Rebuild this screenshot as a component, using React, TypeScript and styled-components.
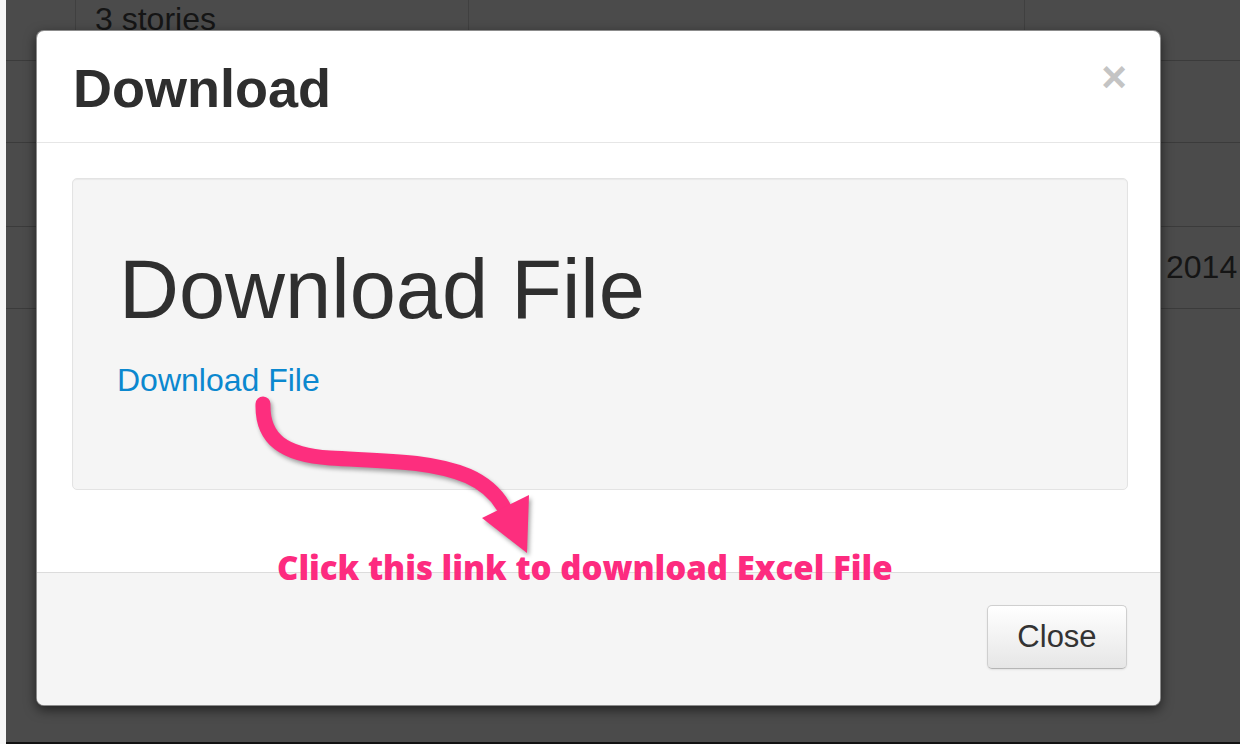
import React from "react";
import styled, { createGlobalStyle } from "styled-components";

const Global = createGlobalStyle`
  html, body { margin: 0; padding: 0; background: #4b4b4b; }
  body { font-family: "Liberation Sans", Arial, sans-serif; }
  * { box-sizing: border-box; }
`;

const Page = styled.div`
  position: relative;
  width: 1240px;
  height: 744px;
  overflow: hidden;
  padding-left: 6px;
  background: #4b4b4b;
  box-shadow: inset 6px 0 0 #f6f6f6, inset 0 -2px 0 #121212;
`;

const Table = styled.div`
  display: grid;
  grid-template-columns: 69px 393px 556px 1fr;
  grid-template-rows: 83px 82px 84px 82px;
  margin-top: -22px;
`;

const Cell = styled.div<{ $first?: boolean; $indent?: number }>`
  border-bottom: 1px solid #3b3b3b;
  border-left: ${(p) => (p.$first ? "none" : "1px solid #404040")};
  color: #151515;
  font-size: 32px;
  display: flex;
  align-items: center;
  padding: 0 0 0 ${(p) => p.$indent ?? 19}px;
  white-space: nowrap;
  overflow: hidden;
`;

const Modal = styled.div`
  position: absolute;
  left: 36px;
  top: 30px;
  width: 1125px;
  height: 676px;
  background: #fff;
  border: 1px solid rgba(0, 0, 0, 0.45);
  border-radius: 8px;
  box-shadow: 0 4px 12px rgba(0, 0, 0, 0.55);
  display: flex;
  flex-direction: column;
  overflow: hidden;
`;

const Header = styled.div`
  height: 112px;
  flex: none;
  padding: 2px 33px 0 36px;
  border-bottom: 1px solid #e6e6e6;
  display: flex;
  align-items: center;
  justify-content: space-between;
`;

const Title = styled.h3`
  margin: 0;
  font-size: 54px;
  line-height: 1;
  font-weight: bold;
  color: #2e2e2e;
`;

const CloseX = styled.span`
  font-size: 44px;
  line-height: 1;
  font-weight: bold;
  color: #c4c4c4;
  margin-top: -22px;
`;

const Body = styled.div`
  flex: none;
  padding: 35px 32px 82px 35px;
`;

const Well = styled.div`
  height: 312px;
  background: #f5f5f5;
  border: 1px solid #e3e3e3;
  border-radius: 5px;
  box-shadow: inset 0 1px 1px rgba(0, 0, 0, 0.05);
  padding: 69px 46px 0 46px;
`;

const Hero = styled.h1`
  margin: 0;
  font-size: 83px;
  line-height: 1;
  font-weight: normal;
  color: #2f2f2f;
`;

const Link = styled.a`
  display: block;
  margin: 33px 0 0 -2px;
  font-size: 32px;
  line-height: 1;
  color: #0b88cf;
  text-decoration: none;
`;

const Footer = styled.div`
  flex: 1;
  background: #f5f5f5;
  border-top: 1px solid #dcdcdc;
  display: flex;
  justify-content: flex-end;
  align-items: flex-start;
  padding: 32px 33px 0 0;
`;

const Button = styled.button`
  width: 140px;
  height: 64px;
  font-family: "Liberation Sans", Arial, sans-serif;
  font-size: 31px;
  color: #333;
  background: linear-gradient(#ffffff, #e6e6e6);
  border: 1px solid #cfcfcf;
  border-bottom-color: #b5b5b5;
  border-radius: 5px;
  box-shadow: inset 0 1px 0 rgba(255, 255, 255, 0.4), 0 1px 2px rgba(0, 0, 0, 0.08);
  padding: 0;
`;

const Overlay = styled.svg`
  position: absolute;
  left: 0;
  top: 0;
  width: 1240px;
  height: 744px;
  pointer-events: none;
  filter: drop-shadow(2px 3px 2px rgba(0, 0, 0, 0.35));
`;

const Note = styled.div`
  position: absolute;
  left: 277px;
  top: 551px;
  font-family: "Open Sans", Lato, sans-serif;
  font-weight: 800;
  font-size: 33px;
  line-height: 1;
  color: #fd2b7f;
  white-space: nowrap;
`;

export default function App() {
  return (
    <>
      <Global />
      <Page>
        <Table>
          <Cell $first />
          <Cell>3 stories</Cell>
          <Cell />
          <Cell />
          <Cell $first />
          <Cell />
          <Cell />
          <Cell />
          <Cell $first />
          <Cell />
          <Cell />
          <Cell />
          <Cell $first />
          <Cell />
          <Cell />
          <Cell $indent={141}>2014</Cell>
        </Table>
        <Modal>
          <Header>
            <Title>Download</Title>
            <CloseX>×</CloseX>
          </Header>
          <Body>
            <Well>
              <Hero>Download File</Hero>
              <Link href="#">Download File</Link>
            </Well>
          </Body>
          <Footer>
            <Button>Close</Button>
          </Footer>
        </Modal>
        <Overlay viewBox="0 0 1240 744">
          <path
            d="M263 404 C 262 440, 285 455, 330 458 C 380 461, 430 460, 468 476 C 486 484, 496 494, 503 506"
            fill="none"
            stroke="#fd2e7e"
            strokeWidth="15"
            strokeLinecap="round"
          />
          <polygon points="482,518 529,495 527,553" fill="#fd2e7e" />
        </Overlay>
        <Note>Click this link to download Excel File</Note>
      </Page>
    </>
  );
}
